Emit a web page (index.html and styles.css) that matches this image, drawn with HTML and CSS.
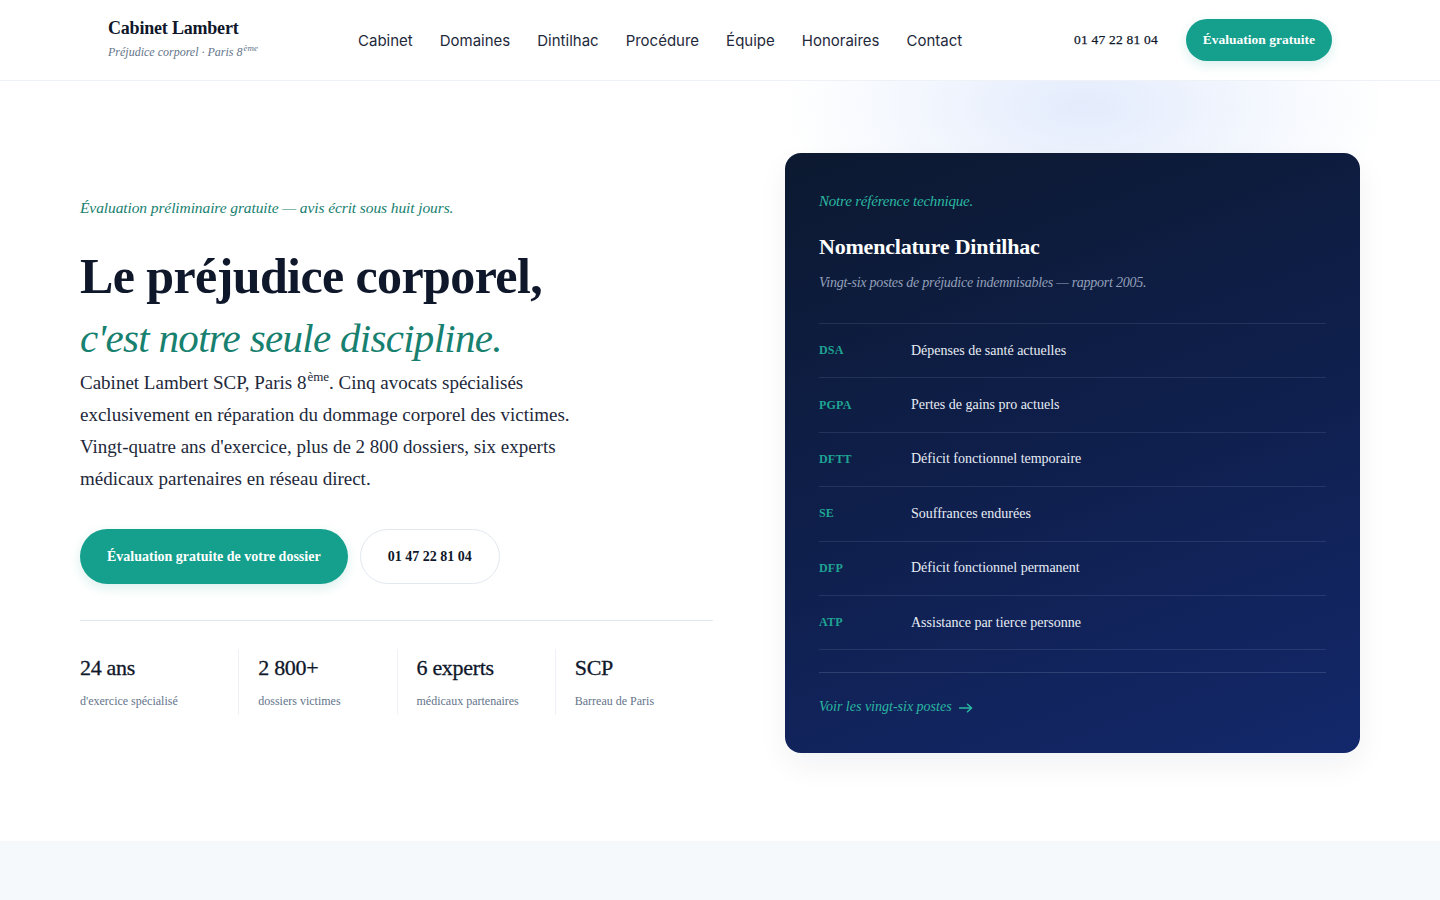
FILE: index.html
```html
<!DOCTYPE html>
<html lang="fr">
<head>
<meta charset="utf-8">
<title>Cabinet Lambert — Préjudice corporel, Paris 8ème</title>
<link rel="stylesheet" href="styles.css">
</head>
<body>
<header class="site-header">
  <div class="brand">
    <div class="brand-name">Cabinet Lambert</div>
    <div class="brand-tag">Préjudice corporel · Paris 8<sup>ème</sup></div>
  </div>
  <nav class="main-nav">
    <a href="#">Cabinet</a>
    <a href="#">Domaines</a>
    <a href="#">Dintilhac</a>
    <a href="#">Procédure</a>
    <a href="#">Équipe</a>
    <a href="#">Honoraires</a>
    <a href="#">Contact</a>
  </nav>
  <div class="header-actions">
    <a class="header-phone" href="#">01 47 22 81 04</a>
    <a class="btn btn-primary btn-small" href="#">Évaluation gratuite</a>
  </div>
</header>

<main>
  <section class="hero">
    <div class="hero-glow"></div>
    <div class="hero-copy">
      <p class="eyebrow">Évaluation préliminaire gratuite — avis écrit sous huit jours.</p>
      <h1 class="hero-title">Le préjudice corporel,<em>c'est notre seule discipline.</em></h1>
      <p class="hero-lead">Cabinet Lambert SCP, Paris 8<sup>ème</sup>. Cinq avocats spécialisés exclusivement en réparation du dommage corporel des victimes. Vingt-quatre ans d'exercice, plus de 2 800 dossiers, six experts médicaux partenaires en réseau direct.</p>
      <div class="hero-ctas">
        <a class="btn btn-primary btn-large" href="#">Évaluation gratuite de votre dossier</a>
        <a class="btn btn-outline btn-large" href="#">01 47 22 81 04</a>
      </div>
      <ul class="stats">
        <li class="stat"><span class="stat-value">24 ans</span><span class="stat-label">d'exercice spécialisé</span></li>
        <li class="stat"><span class="stat-value">2 800+</span><span class="stat-label">dossiers victimes</span></li>
        <li class="stat"><span class="stat-value">6 experts</span><span class="stat-label">médicaux partenaires</span></li>
        <li class="stat"><span class="stat-value">SCP</span><span class="stat-label">Barreau de Paris</span></li>
      </ul>
    </div>

    <aside class="dintilhac-card">
      <p class="card-eyebrow">Notre référence technique.</p>
      <h2 class="card-title">Nomenclature Dintilhac</h2>
      <p class="card-sub">Vingt-six postes de préjudice indemnisables — rapport 2005.</p>
      <ul class="postes">
        <li><span class="code">DSA</span><span class="label">Dépenses de santé actuelles</span></li>
        <li><span class="code">PGPA</span><span class="label">Pertes de gains pro actuels</span></li>
        <li><span class="code">DFTT</span><span class="label">Déficit fonctionnel temporaire</span></li>
        <li><span class="code">SE</span><span class="label">Souffrances endurées</span></li>
        <li><span class="code">DFP</span><span class="label">Déficit fonctionnel permanent</span></li>
        <li><span class="code">ATP</span><span class="label">Assistance par tierce personne</span></li>
      </ul>
      <a class="card-link" href="#">Voir les vingt-six postes
        <svg class="arrow" width="14" height="10" viewBox="0 0 14 10" aria-hidden="true"><path d="M0.5 5H12.5M8.5 1.2L12.6 5L8.5 8.8" fill="none" stroke="currentColor" stroke-width="1.5" stroke-linecap="round" stroke-linejoin="round"/></svg>
      </a>
    </aside>
  </section>

  <section class="next-section"></section>
</main>
</body>
</html>
```

FILE: styles.css
```css
* {
  box-sizing: border-box;
}

html, body {
  margin: 0;
  padding: 0;
}

body {
  background: #ffffff;
  color: #1e293b;
  font-family: "Liberation Serif", "Times New Roman", serif;
  overflow: hidden;
}

a {
  color: inherit;
  text-decoration: none;
}

ul {
  list-style: none;
  margin: 0;
  padding: 0;
}

/* ---------- Header ---------- */

.site-header {
  height: 81px;
  padding: 0 108px;
  display: flex;
  align-items: center;
  border-bottom: 1px solid #eef1f6;
  background: #fff;
  position: relative;
  z-index: 2;
}

.brand {
  width: 250px;
  display: flex;
  flex-direction: column;
  gap: 6px;
  margin-top: -2px;
}

.brand-name {
  font-size: 18px;
  font-weight: 700;
  color: #0f172a;
  letter-spacing: -0.2px;
}

.brand-tag {
  font-size: 12px;
  font-style: italic;
  color: #64748b;
}

.brand-tag sup {
  font-size: 9px;
  vertical-align: 5px;
  line-height: 0;
  margin-left: 1px;
}

.main-nav {
  display: flex;
  gap: 27px;
  font-family: "Inter", "Liberation Sans", sans-serif;
  font-size: 15px;
  color: #1e293b;
}

.header-actions {
  margin-left: auto;
  display: flex;
  align-items: center;
  gap: 28px;
}

.header-phone {
  font-size: 13.5px;
  font-weight: 400;
  color: #0f172a;
  letter-spacing: 0.2px;
  -webkit-text-stroke: 0.25px #0f172a;
}

/* ---------- Buttons ---------- */

.btn {
  display: inline-flex;
  align-items: center;
  justify-content: center;
  border-radius: 999px;
  font-family: "Liberation Serif", serif;
  font-weight: 700;
}

.btn-primary {
  background: #14a08d;
  color: #fff;
  box-shadow: 0 4px 12px rgba(20, 160, 141, 0.16);
}

.btn-small {
  height: 42px;
  padding: 0 17px;
  font-size: 13.5px;
}

.btn-large {
  height: 55px;
  padding: 0 27px;
  font-size: 14px;
}

.btn-outline {
  background: #fff;
  color: #0f172a;
  border: 1px solid #e2e8f0;
  box-shadow: none;
}

/* ---------- Hero ---------- */

.hero {
  position: relative;
  display: flex;
  align-items: flex-start;
  justify-content: space-between;
  padding: 72px 80px 88px;
  height: 760px;
}

.hero-glow {
  position: absolute;
  top: 0;
  left: 790px;
  width: 590px;
  height: 170px;
  background: radial-gradient(ellipse at 50% 15%, rgba(224, 233, 252, 0.9) 0%, rgba(236, 242, 253, 0.65) 40%, rgba(255, 255, 255, 0) 72%);
  pointer-events: none;
}

.hero-copy {
  width: 633px;
  position: relative;
  margin-top: 46px;
}

.eyebrow {
  margin: 0 0 30px;
  font-size: 15.5px;
  font-style: italic;
  color: #17806f;
  letter-spacing: -0.1px;
}

.hero-title {
  margin: 0;
  font-size: 50px;
  font-weight: 700;
  line-height: 58px;
  color: #0f172a;
  letter-spacing: -0.6px;
}

.hero-title em {
  display: block;
  margin-top: 12px;
  font-size: 41px;
  font-weight: 400;
  line-height: 42px;
  color: #17806f;
  letter-spacing: -0.7px;
}

.hero-lead {
  margin: 8px 0 0;
  width: 535px;
  font-size: 19px;
  line-height: 32px;
  color: #1e293b;
  hyphens: none;
}

.hero-lead sup {
  font-size: 13px;
  vertical-align: 8px;
  line-height: 0;
  margin-left: 1px;
}

.hero-ctas {
  display: flex;
  gap: 12px;
  margin-top: 34px;
}

.stats {
  margin-top: 36px;
  border-top: 1px solid #e2e8f0;
  padding-top: 28px;
  display: grid;
  grid-template-columns: repeat(4, 1fr);
}

.stat {
  display: flex;
  flex-direction: column;
  gap: 13px;
  padding: 6px 0 6px 19px;
  border-left: 1px solid #eef1f5;
}

.stat:first-child {
  padding-left: 0;
  border-left: none;
}

.stat-value {
  font-size: 22px;
  color: #0f172a;
  letter-spacing: -0.3px;
  -webkit-text-stroke: 0.3px #0f172a;
}

.stat-label {
  font-size: 12px;
  color: #64748b;
}

/* ---------- Dintilhac card ---------- */

.dintilhac-card {
  position: relative;
  width: 575px;
  height: 600px;
  padding: 40px 34px 0;
  border-radius: 16px;
  background: linear-gradient(160deg, #0c1930 0%, #0f1f4c 50%, #13286b 100%);
  color: #f1f5f9;
  box-shadow: 0 12px 30px rgba(15, 31, 76, 0.06);
}

.card-eyebrow {
  margin: 0;
  font-size: 15px;
  font-style: italic;
  color: #2bb8a2;
  letter-spacing: -0.2px;
}

.card-title {
  margin: 24px 0 0;
  font-size: 22px;
  font-weight: 700;
  color: #ffffff;
  letter-spacing: -0.2px;
}

.card-sub {
  margin: 15px 0 0;
  font-size: 14px;
  font-style: italic;
  color: #94a0ba;
  letter-spacing: -0.25px;
}

.postes {
  margin-top: 32px;
  border-top: 1px solid rgba(148, 163, 200, 0.16);
}

.postes li {
  display: flex;
  align-items: center;
  height: 54.4px;
  border-bottom: 1px solid rgba(148, 163, 200, 0.16);
}

.code {
  width: 92px;
  font-size: 12px;
  font-weight: 700;
  color: #1fa594;
  letter-spacing: 0.2px;
}

.label {
  font-size: 14px;
  color: #e8edf5;
}

.card-link {
  display: flex;
  align-items: center;
  gap: 7px;
  margin-top: 22px;
  padding-top: 26px;
  border-top: 1px solid rgba(148, 163, 200, 0.22);
  font-size: 14px;
  font-style: italic;
  color: #2bb8a2;
}

.arrow {
  display: block;
  margin-top: 1px;
}

/* ---------- Following section ---------- */

.next-section {
  height: 59px;
  background: #f5f9fc;
}
```
